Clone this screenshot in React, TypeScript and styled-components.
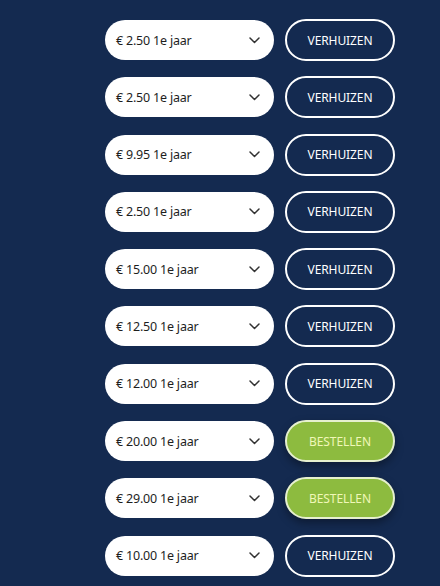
import React from "react";
import styled, { createGlobalStyle } from "styled-components";

const Global = createGlobalStyle`
  html, body { margin: 0; padding: 0; background: #142a50; }
  body { font-family: "Noto Sans", "Open Sans", sans-serif; }
`;

const Page = styled.div`
  width: 440px;
  height: 586px;
  background: #142a50;
  box-sizing: border-box;
  padding: 19px 0 0 105px;
  display: flex;
  flex-direction: column;
  gap: 15.3px;
  overflow: hidden;
`;

const Row = styled.div`
  display: flex;
  align-items: center;
  height: 42px;
  gap: 11px;
`;

const Select = styled.div`
  width: 169px;
  height: 40px;
  background: #ffffff;
  border-radius: 20px;
  box-sizing: border-box;
  padding: 0 14px 0 11px;
  display: flex;
  align-items: center;
  justify-content: space-between;
  font-size: 12.5px;
  letter-spacing: -0.2px;
  color: #1e1e1e;
`;

const Button = styled.div<{ $green?: boolean }>`
  width: 110px;
  height: 42px;
  box-sizing: border-box;
  border-radius: 21px;
  border: 2px solid ${(p) => (p.$green ? "#e6f0cf" : "#ffffff")};
  background: ${(p) => (p.$green ? "#8dbb3f" : "transparent")};
  color: ${(p) => (p.$green ? "#f0f7b8" : "#ffffff")};
  box-shadow: ${(p) => (p.$green ? "0 4px 8px rgba(0,0,0,0.35)" : "none")};
  display: flex;
  align-items: center;
  justify-content: center;
  font-size: 12px;
  letter-spacing: -0.1px;
`;

const Chevron = () => (
  <svg width="11" height="7" viewBox="0 0 11 7" fill="none">
    <path d="M1 1l4.5 4.5L10 1" stroke="#333" strokeWidth="1.5" strokeLinecap="round" strokeLinejoin="round" />
  </svg>
);

const rows: { price: string; green?: boolean }[] = [
  { price: "2.50" },
  { price: "2.50" },
  { price: "9.95" },
  { price: "2.50" },
  { price: "15.00" },
  { price: "12.50" },
  { price: "12.00" },
  { price: "20.00", green: true },
  { price: "29.00", green: true },
  { price: "10.00" },
];

export default function App() {
  return (
    <>
      <Global />
      <Page>
        {rows.map((r, i) => (
          <Row key={i}>
            <Select>
              <span>€ {r.price} 1e jaar</span>
              <Chevron />
            </Select>
            <Button $green={r.green}>{r.green ? "BESTELLEN" : "VERHUIZEN"}</Button>
          </Row>
        ))}
      </Page>
    </>
  );
}
